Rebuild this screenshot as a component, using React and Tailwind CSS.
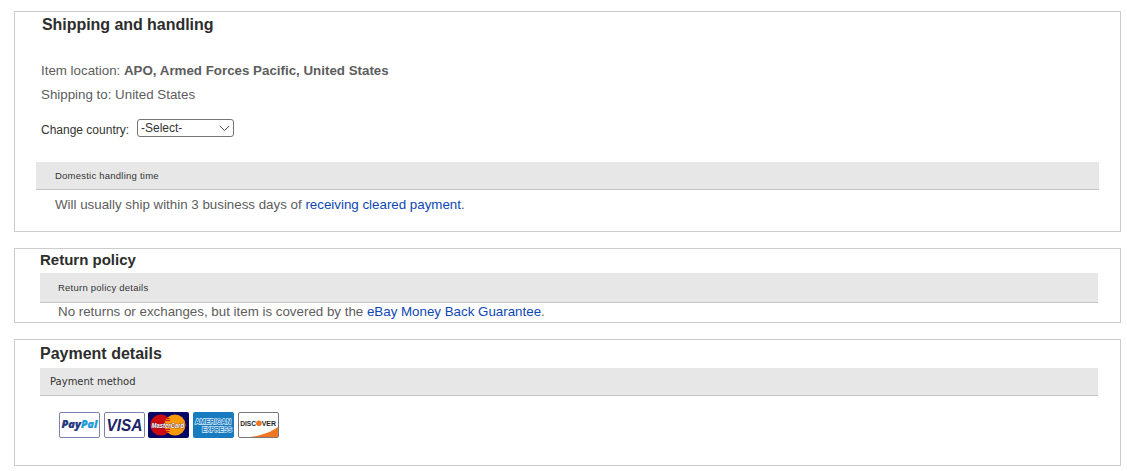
import React from 'react';

const PayPalCard = () => (
  <svg width="41" height="26" viewBox="0 0 41 26" role="img" aria-label="PayPal">
    <rect x="0.5" y="0.5" width="40" height="25" rx="1.5" fill="#fff" stroke="#7d81b0" />
    <g
      fontFamily="Open Sans, sans-serif"
      fontSize="10.5"
      fontWeight="800"
      fontStyle="italic"
      strokeWidth="0.2"
    >
      <text x="2.5" y="16.3" fill="#24387c" stroke="#24387c" textLength="19.5" lengthAdjust="spacingAndGlyphs">
        Pay
      </text>
      <text x="22" y="16.3" fill="#1b9bd8" stroke="#1b9bd8" textLength="16.5" lengthAdjust="spacingAndGlyphs">
        Pal
      </text>
    </g>
  </svg>
);

const VisaCard = () => (
  <svg width="41" height="26" viewBox="0 0 41 26" role="img" aria-label="Visa">
    <rect x="0.5" y="0.5" width="40" height="25" rx="1.5" fill="#fff" stroke="#7d81b0" />
    <text
      x="2.5"
      y="18.6"
      fill="#1e2268"
      fontFamily="Liberation Sans, sans-serif"
      fontSize="16.5"
      fontWeight="700"
      fontStyle="italic"
      textLength="36"
      lengthAdjust="spacingAndGlyphs"
    >
      VISA
    </text>
  </svg>
);

const MasterCard = () => (
  <svg width="41" height="26" viewBox="0 0 41 26" role="img" aria-label="MasterCard">
    <rect width="41" height="26" rx="2" fill="#050566" />
    <circle cx="12.8" cy="13" r="10.5" fill="#cc0a12" />
    <circle cx="27" cy="13" r="10.5" fill="#fb9a09" />
    <path d="M19 6.5h2.5M18 8.5h4M18 17.5h4M19 19.5h2.5" stroke="#cc0a12" />
    <text
      x="3.5"
      y="16"
      fill="#fff"
      stroke="#4d1432"
      strokeWidth="0.7"
      paintOrder="stroke"
      fontFamily="Liberation Sans, sans-serif"
      fontSize="7.5"
      fontWeight="700"
      fontStyle="italic"
      textLength="32.5"
      lengthAdjust="spacingAndGlyphs"
    >
      MasterCard
    </text>
  </svg>
);

const AmexCard = () => (
  <svg width="41" height="26" viewBox="0 0 41 26" role="img" aria-label="American Express">
    <rect width="41" height="26" rx="2" fill="#187bc0" />
    <g
      fill="#187bc0"
      stroke="#d4e9f6"
      strokeWidth="1.3"
      paintOrder="stroke"
      fontFamily="Liberation Sans, sans-serif"
      fontSize="7"
      fontWeight="700"
    >
      <text x="2" y="12.3" textLength="36" lengthAdjust="spacingAndGlyphs">
        AMERICAN
      </text>
      <text x="9" y="20" textLength="30" lengthAdjust="spacingAndGlyphs">
        EXPRESS
      </text>
    </g>
  </svg>
);

const DiscoverCard = () => (
  <svg width="41" height="26" viewBox="0 0 41 26" role="img" aria-label="Discover">
    <rect x="0.5" y="0.5" width="40" height="25" rx="1.5" fill="#fff" stroke="#77777a" />
    <path d="M40 15v10H12C24 23.5 33 20 40 15Z" fill="#ef7622" />
    <g fill="#252525" fontFamily="Liberation Sans, sans-serif" fontSize="7.5" fontWeight="700">
      <text x="2.3" y="14" textLength="15.7" lengthAdjust="spacingAndGlyphs">
        DISC
      </text>
      <text x="23.7" y="14" textLength="14.3" lengthAdjust="spacingAndGlyphs">
        VER
      </text>
    </g>
    <circle cx="20.9" cy="11.3" r="2.8" fill="#ef7622" />
  </svg>
);

const App = () => {
  return (
    <main className="h-[471px] space-y-4 bg-white pt-[11px] pr-[6px] pl-[14px] font-['Liberation_Sans',sans-serif] text-[13.33px] text-[#5d5d5d]">
      <section className="h-[221px] border border-[#ccc]">
        <h2 className="ml-[27px] h-[47px] pt-[2px] text-[16px] leading-[22px] font-bold tracking-[-0.05px] text-[#2d2d2d]">
          <span>Shipping and handling</span>
        </h2>
        <p className="ml-[26px] h-6 leading-6">
          <span>Item location: </span>
          <b>APO, Armed Forces Pacific, United States</b>
        </p>
        <p className="ml-[26px] h-6 leading-6">
          <span>Shipping to: United States</span>
        </p>
        <div className="ml-[26px] flex h-[55px] pt-3 text-[12px] text-[#333]">
          <label className="w-[96px] pt-[3px] leading-4">Change country:</label>
          <button className="flex h-[18px] w-[97px] items-center justify-between rounded-[3px] border border-[#767676] pr-[3px] pl-[3px] leading-4">
            <span>-Select-</span>
            <svg width="11" height="7" viewBox="0 0 11 7" fill="none" stroke="#444">
              <path d="M0.7 0.8 5.5 5.6 10.3 0.8" />
            </svg>
          </button>
        </div>
        <div className="mr-[21px] ml-[21px] h-7 border-b border-[#c4c4c4] bg-[#e7e7e7] pl-[19px] text-[9.5px] leading-[27px] tracking-[0.23px] text-[#333]">
          <span>Domestic handling time</span>
        </div>
        <p className="ml-10 pt-[3px] leading-6">
          Will usually ship within 3 business days of{' '}
          <a className="text-[#0d47b5]">receiving cleared payment</a>.
        </p>
      </section>

      <section className="h-[75px] border border-[#ccc]">
        <h2 className="ml-[25px] h-6 text-[15px] leading-[22px] font-bold text-[#2d2d2d]">
          <span>Return policy</span>
        </h2>
        <div className="mr-[22px] ml-[25px] h-[30px] border-b border-[#c4c4c4] bg-[#e7e7e7] pl-[18px] text-[9.5px] leading-[29px] tracking-[0.23px] text-[#333]">
          <span>Return policy details</span>
        </div>
        <p className="ml-[43px] leading-[18px]">
          No returns or exchanges, but item is covered by the{' '}
          <a className="text-[#0d47b5]">eBay Money Back Guarantee</a>.
        </p>
      </section>

      <section className="h-[127px] border border-[#ccc]">
        <h2 className="ml-[25px] h-7 pt-[3px] text-[16px] leading-[22px] font-bold text-[#2d2d2d]">
          <span>Payment details</span>
        </h2>
        <div className="mr-[22px] ml-[25px] h-7 border-b border-[#c4c4c4] bg-[#e7e7e7] pl-[10px] font-['DejaVu_Sans',sans-serif] text-[10px] leading-[27px] text-[#333]">
          <span>Payment method</span>
        </div>
        <div className="mt-4 ml-11 flex gap-[3.7px]">
          <PayPalCard />
          <VisaCard />
          <MasterCard />
          <AmexCard />
          <DiscoverCard />
        </div>
      </section>
    </main>
  );
};

export default App;
